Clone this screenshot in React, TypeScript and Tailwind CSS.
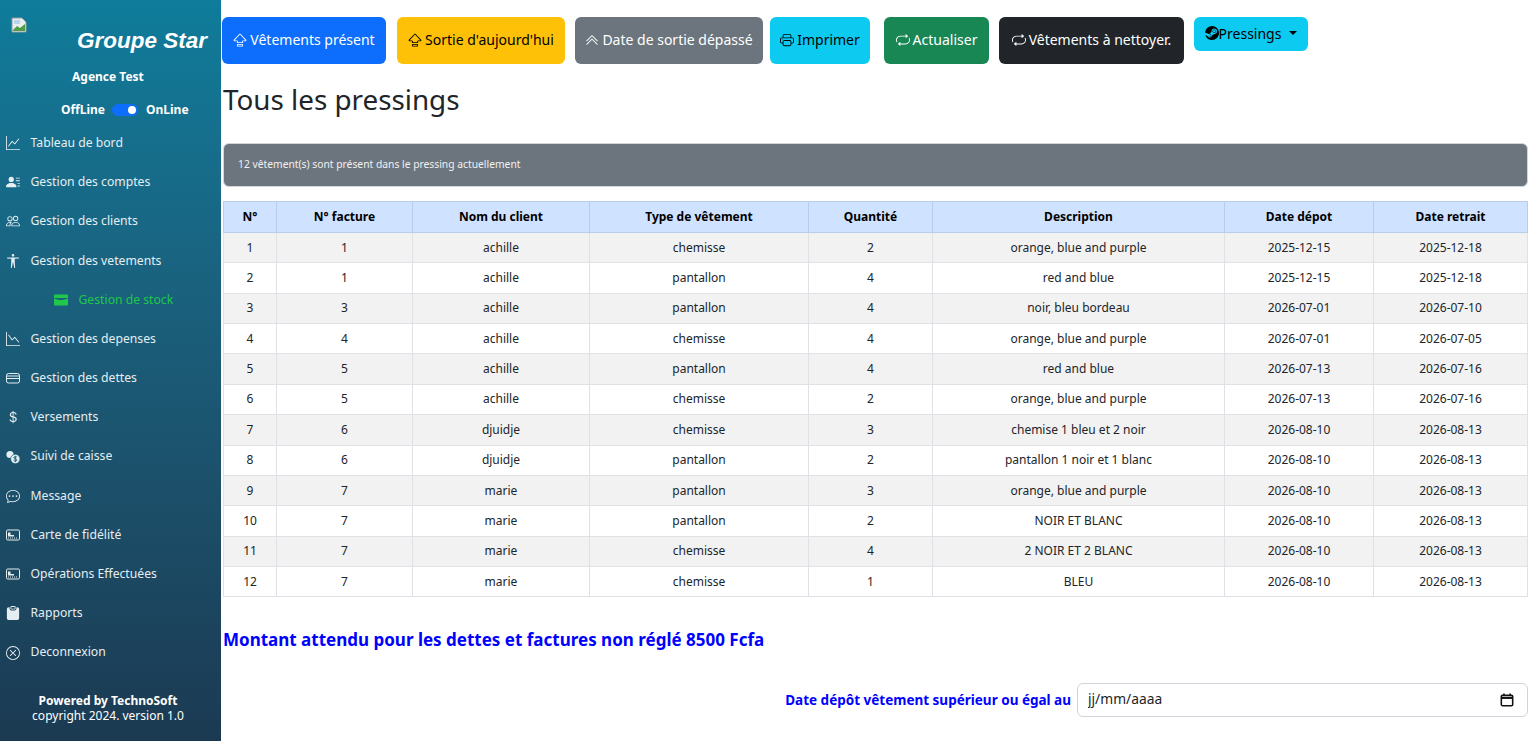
import React from 'react'
import {
  BsGraphUp, BsPersonLinesFill, BsPeople, BsUniversalAccess, BsGraphDown,
  BsCurrencyDollar, BsChatDots, BsClipboardFill, BsXCircle, BsCapslock,
  BsChevronDoubleUp, BsPrinter, BsRepeat, BsSteam,
} from 'react-icons/bs'

type IconProps = { className?: string }

const font = "font-['Noto_Sans',sans-serif]"

// petites icones dessinees a la main, absentes des packs
const StockIcon: React.FC<IconProps> = ({ className }) => (
  <svg viewBox="0 0 14 14" className={className} fill="currentColor">
    <path d="M1 1.5h12a1 1 0 0 1 1 1V5H0V2.5a1 1 0 0 1 1-1z" />
    <path d="M0 5.6 5 7h4l5-1.4V11.5a1 1 0 0 1-1 1H1a1 1 0 0 1-1-1z" />
  </svg>
)

const DebtIcon: React.FC<IconProps> = ({ className }) => (
  <svg viewBox="0 0 14 14" className={className} fill="none" stroke="currentColor" strokeWidth="1">
    <rect x="0.5" y="2.5" width="13" height="9.5" rx="2" />
    <path d="M1 5h12M1 7.5h12" />
  </svg>
)

const CoinsIcon: React.FC<IconProps> = ({ className }) => (
  <svg viewBox="0 0 14 14" className={className}>
    <circle cx="4" cy="4.5" r="3.6" fill="currentColor" />
    <circle cx="9.3" cy="9" r="4.7" fill="currentColor" stroke="#165a78" strokeWidth="0.7" />
    <path d="M11 7.3c-.5-.7-3.2-.9-3.3.5s3.4.9 3.3 2.3-2.9 1-3.4.3M9.3 5.8v6.4" fill="none" stroke="#165a78" strokeWidth="0.9" />
  </svg>
)

const CardIcon: React.FC<IconProps> = ({ className }) => (
  <svg viewBox="0 0 14 14" className={className}>
    <rect x="0.5" y="2" width="13" height="10" rx="1.2" fill="none" stroke="currentColor" />
    <path d="M2 4.5h2.5v2.5H8v1.5H2z" fill="currentColor" />
    <path d="M2 10h9" stroke="currentColor" strokeDasharray="1 1" />
  </svg>
)

const BrokenImage: React.FC = () => (
  <svg viewBox="0 0 16 16" className="w-[16px] h-[16px]">
    <path d="M1 1h10l4 4v10H1z" fill="#e8edf0" stroke="#8f9aa0" strokeWidth="1" />
    <path d="M2 13l4-4 3 2 5-4v7H2z" fill="#4f9e46" />
    <path d="M3 3h6v4H3z" fill="#b9d3ee" />
  </svg>
)

const menu = [
  { label: 'Tableau de bord', icon: BsGraphUp },
  { label: 'Gestion des comptes', icon: BsPersonLinesFill },
  { label: 'Gestion des clients', icon: BsPeople },
  { label: 'Gestion des vetements', icon: BsUniversalAccess },
  { label: 'Gestion de stock', icon: StockIcon, active: true },
  { label: 'Gestion des depenses', icon: BsGraphDown },
  { label: 'Gestion des dettes', icon: DebtIcon },
  { label: 'Versements', icon: BsCurrencyDollar },
  { label: 'Suivi de caisse', icon: CoinsIcon },
  { label: 'Message', icon: BsChatDots },
  { label: 'Carte de fidélité', icon: CardIcon },
  { label: 'Opérations Effectuées', icon: CardIcon },
  { label: 'Rapports', icon: BsClipboardFill },
  { label: 'Deconnexion', icon: BsXCircle },
]

const headers = ['N°', 'N° facture', 'Nom du client', 'Type de vêtement', 'Quantité', 'Description', 'Date dépot', 'Date retrait']

const rows = [
  [1, 1, 'achille', 'chemisse', 2, 'orange, blue and purple', '2025-12-15', '2025-12-18'],
  [2, 1, 'achille', 'pantallon', 4, 'red and blue', '2025-12-15', '2025-12-18'],
  [3, 3, 'achille', 'pantallon', 4, 'noir, bleu bordeau', '2026-07-01', '2026-07-10'],
  [4, 4, 'achille', 'chemisse', 4, 'orange, blue and purple', '2026-07-01', '2026-07-05'],
  [5, 5, 'achille', 'pantallon', 4, 'red and blue', '2026-07-13', '2026-07-16'],
  [6, 5, 'achille', 'chemisse', 2, 'orange, blue and purple', '2026-07-13', '2026-07-16'],
  [7, 6, 'djuidje', 'chemisse', 3, 'chemise 1 bleu et 2 noir', '2026-08-10', '2026-08-13'],
  [8, 6, 'djuidje', 'pantallon', 2, 'pantallon 1 noir et 1 blanc', '2026-08-10', '2026-08-13'],
  [9, 7, 'marie', 'pantallon', 3, 'orange, blue and purple', '2026-08-10', '2026-08-13'],
  [10, 7, 'marie', 'pantallon', 2, 'NOIR ET BLANC', '2026-08-10', '2026-08-13'],
  [11, 7, 'marie', 'chemisse', 4, '2 NOIR ET 2 BLANC', '2026-08-10', '2026-08-13'],
  [12, 7, 'marie', 'chemisse', 1, 'BLEU', '2026-08-10', '2026-08-13'],
]

const colWidths = ['w-[53px]', 'w-[136px]', 'w-[177px]', 'w-[219px]', 'w-[124px]', 'w-[292px]', 'w-[149px]', 'w-[154px]']

const Sidebar: React.FC = () => (
  <aside className="w-[221px] h-[741px] shrink-0 bg-gradient-to-b from-[#0e7c9b] to-[#1b3a52] text-white flex flex-col">
    <div className="h-[54px] pt-[17px] pl-[11px] flex flex-col">
      <BrokenImage />
      <span className="-mt-[5px] self-end pr-[14px] font-['Liberation_Sans',sans-serif] italic font-bold text-[22.5px] leading-[26px] text-white">Groupe Star</span>
    </div>
    <p className="mt-[14px] pl-[72px] text-[12px] font-bold leading-[18px]">Agence Test</p>
    <div className="mt-[15px] pl-[61px] flex items-center text-[12px] font-bold leading-[18px]">
      <span>OffLine</span>
      <span className="ml-[7px] w-[26px] h-[12px] rounded-full bg-[#0d6efd] flex items-center justify-end pr-[2px]">
        <span className="w-[8px] h-[8px] rounded-full bg-white" />
      </span>
      <span className="ml-[8px]">OnLine</span>
    </div>
    <nav className="mt-[4.5px] flex flex-col">
      {menu.map((m) => (
        <div
          key={m.label}
          className={`h-[39.2px] flex items-center text-[12.2px] ${m.active ? 'pl-[54px] text-[#1fc74a]' : 'pl-[6px] text-[#e6eef2]'}`}
        >
          <m.icon className="w-[14px] h-[14px] shrink-0" />
          <span className="ml-[10.5px]">{m.label}</span>
        </div>
      ))}
    </nav>
    <div className="mt-[21px] pr-[5px] text-center text-[12px] leading-[15px]">
      <p className="font-bold">Powered by TechnoSoft</p>
      <p>copyright 2024. version 1.0</p>
    </div>
  </aside>
)

const btn = 'h-[47px] pb-[2px] rounded-[6px] flex items-center justify-center text-[14px] whitespace-nowrap'

const Toolbar: React.FC = () => (
  <div className="flex items-start -ml-[1px]">
    <div className={`${btn} w-[164px] bg-[#0d6efd] text-white`}><BsCapslock className="w-[14px] h-[14px] mr-[3px]" />Vêtements présent</div>
    <div className={`${btn} w-[168px] ml-[11px] bg-[#ffc107] text-black`}><BsCapslock className="w-[14px] h-[14px] mr-[3px]" />Sortie d'aujourd'hui</div>
    <div className={`${btn} w-[188px] ml-[10px] bg-[#6c757d] text-white`}><BsChevronDoubleUp className="w-[14px] h-[14px] mr-[3px]" />Date de sortie dépassé</div>
    <div className={`${btn} w-[100px] ml-[7px] bg-[#0dcaf0] text-black`}><BsPrinter className="w-[14px] h-[14px] mr-[3px]" />Imprimer</div>
    <div className={`${btn} w-[105px] ml-[14px] bg-[#198754] text-white`}><BsRepeat className="w-[14px] h-[14px] mr-[3px]" />Actualiser</div>
    <div className={`${btn} w-[185px] ml-[10px] bg-[#212529] text-white`}><BsRepeat className="w-[14px] h-[14px] mr-[3px]" />Vêtements à nettoyer.</div>
    <div className="h-[34px] pb-[2px] w-[114px] ml-[10px] rounded-[6px] bg-[#0dcaf0] text-black flex items-center justify-center text-[14px]">
      <BsSteam className="w-[14px] h-[14px]" />Pressings
      <span className="ml-[8px] border-x-[4px] border-x-transparent border-t-[4px] border-t-black" />
    </div>
  </div>
)

const App: React.FC = () => {
  return (
    <div className={`${font} flex w-[1530px] h-[741px] overflow-hidden bg-white text-[#212529]`}>
      <Sidebar />
      <main className="flex-1 pl-[2px] pr-[2px] pt-[17px] min-w-0">
        <Toolbar />
        <h1 className="mt-[14px] text-[27.8px] leading-[42px]">Tous les pressings</h1>
        <div className="mt-[23px] h-[44px] rounded-[6px] bg-[#6c757d] border border-[#d3d6d8] flex items-center pl-[14px] text-[10.3px] text-[#f0f1f2]">
          12 vêtement(s) sont présent dans le pressing actuellement
        </div>
        <table className="mt-[14px] w-[1304px] table-fixed border-collapse text-[12px]">
          <thead>
            <tr className="h-[31px] bg-[#cfe2ff]">
              {headers.map((h, i) => (
                <th key={h} className={`${colWidths[i]} border border-[#b9cde9] font-bold text-black text-center`}>{h}</th>
              ))}
            </tr>
          </thead>
          <tbody>
            {rows.map((r, i) => (
              <tr key={i} className={`h-[30.36px] ${i % 2 === 0 ? 'bg-[#f2f2f2]' : 'bg-white'}`}>
                {r.map((c, j) => (
                  <td key={j} className="border border-[#dee2e6] text-center">{c}</td>
                ))}
              </tr>
            ))}
          </tbody>
        </table>
        <h5 className="mt-[31px] text-[17px] leading-[24px] font-bold text-[#0000ff]">Montant attendu pour les dettes et factures non réglé 8500 Fcfa</h5>
        <div className="mt-[31px] flex items-center justify-end">
          <label className="mr-[6px] text-[13.5px] font-bold text-[#0000ff]">Date dépôt vêtement supérieur ou égal au</label>
          <div className="w-[451px] h-[34px] pb-[1px] rounded-[6px] border border-[#ced4da] pl-[10px] pr-[13px] flex items-center justify-between">
            <input placeholder="jj/mm/aaaa" className="w-[200px] text-[13.8px] outline-none placeholder:text-[#212529]" />
            <svg viewBox="0 0 16 16" className="w-[14px] h-[14px]" fill="none" stroke="#111" strokeWidth="1.8">
              <rect x="1.5" y="2.5" width="13" height="12" rx="1.5" />
              <path d="M1.5 5.5h13" strokeWidth="2.6" />
              <path d="M4.5 0.5v3M11.5 0.5v3" />
            </svg>
          </div>
        </div>
      </main>
    </div>
  )
}

export default App
